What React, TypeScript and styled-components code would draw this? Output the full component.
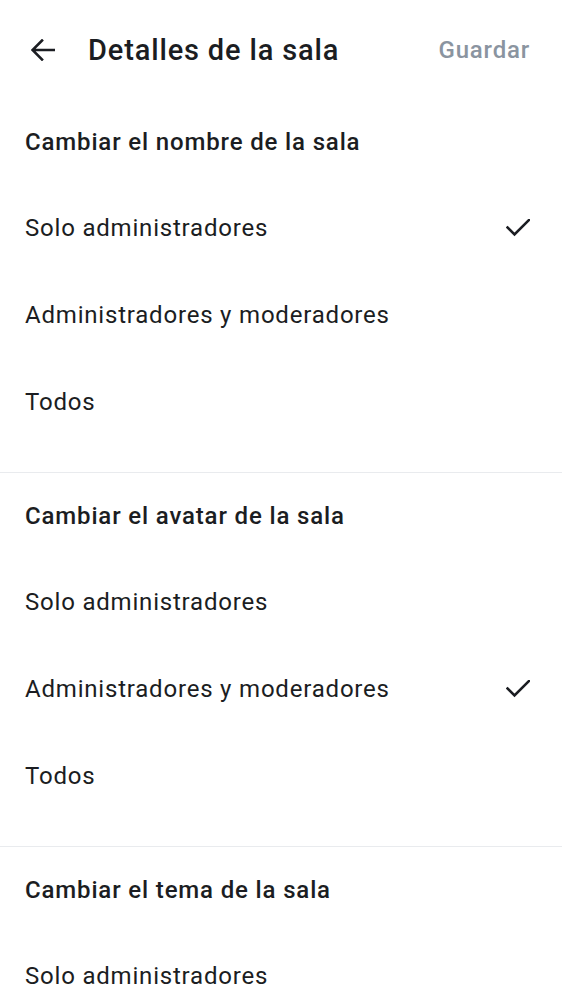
import React from "react";
import styled, { createGlobalStyle } from "styled-components";

const Global = createGlobalStyle`
  html, body { margin: 0; padding: 0; background: #ffffff; }
  body { font-family: Roboto, "Noto Sans", sans-serif; color: #1b1d22; -webkit-font-smoothing: antialiased; }
`;

const Page = styled.div`
  width: 562px;
  background: #ffffff;
`;

const Header = styled.header`
  height: 99px;
  display: flex;
  align-items: center;
  padding: 0 32px 0 31px;
  box-sizing: border-box;
`;

const BackButton = styled.button`
  border: none;
  background: none;
  padding: 0;
  width: 24px;
  height: 22px;
  display: flex;
  align-items: center;
  justify-content: center;
  color: #1b1d22;
  cursor: pointer;
`;

const Title = styled.h1`
  margin: 0 0 0 33px;
  flex: 1;
  font-family: Roboto, sans-serif;
  font-size: 29px;
  font-weight: 500;
  letter-spacing: 0.85px;
  color: #1b1d22;
`;

const SaveButton = styled.button`
  border: none;
  background: none;
  padding: 0;
  font-family: Roboto, sans-serif;
  font-size: 24px;
  font-weight: 500;
  letter-spacing: 0.8px;
  color: #8a94a0;
`;

const Section = styled.section<{ $last?: boolean }>`
  padding-bottom: ${(p) => (p.$last ? "0" : "26px")};
  border-bottom: ${(p) => (p.$last ? "none" : "1px solid #e9ebee")};
`;

const SectionTitle = styled.h2`
  margin: 0;
  height: 86px;
  box-sizing: border-box;
  padding: 0 25px 1px;
  display: flex;
  align-items: center;
  font-family: Roboto, sans-serif;
  font-size: 24px;
  font-weight: 500;
  letter-spacing: 0.85px;
  color: #1b1d22;
`;

const Option = styled.div`
  height: 87px;
  box-sizing: border-box;
  padding: 0 32px 1px 25px;
  display: flex;
  align-items: center;
  justify-content: space-between;
  font-family: Roboto, sans-serif;
  font-size: 24px;
  font-weight: 400;
  letter-spacing: 0.8px;
  color: #1b1d22;
`;

const Check = () => (
  <svg width="24" height="18" viewBox="0 0 24 18" fill="none">
    <path d="M1.5 8.5 L8.5 15.5 L23 1" stroke="#1b1d22" strokeWidth="2.6" strokeLinecap="square" />
  </svg>
);

const Arrow = () => (
  <svg width="24" height="22" viewBox="0 0 24 22" fill="none">
    <path d="M23 11 H2.5 M11 1.5 L1.5 11 L11 20.5" stroke="#1b1d22" strokeWidth="2.6" strokeLinecap="square" />
  </svg>
);

const sections = [
  { title: "Cambiar el nombre de la sala", selected: 0 },
  { title: "Cambiar el avatar de la sala", selected: 1 },
  { title: "Cambiar el tema de la sala", selected: -1 },
];

const options = ["Solo administradores", "Administradores y moderadores", "Todos"];

export default function App() {
  return (
    <Page>
      <Global />
      <Header>
        <BackButton aria-label="Volver">
          <Arrow />
        </BackButton>
        <Title>Detalles de la sala</Title>
        <SaveButton>Guardar</SaveButton>
      </Header>
      {sections.map((s, i) => (
        <Section key={s.title} $last={i === sections.length - 1}>
          <SectionTitle>{s.title}</SectionTitle>
          {options.map((o, j) => (
            <Option key={o}>
              <span>{o}</span>
              {s.selected === j && <Check />}
            </Option>
          ))}
        </Section>
      ))}
    </Page>
  );
}
